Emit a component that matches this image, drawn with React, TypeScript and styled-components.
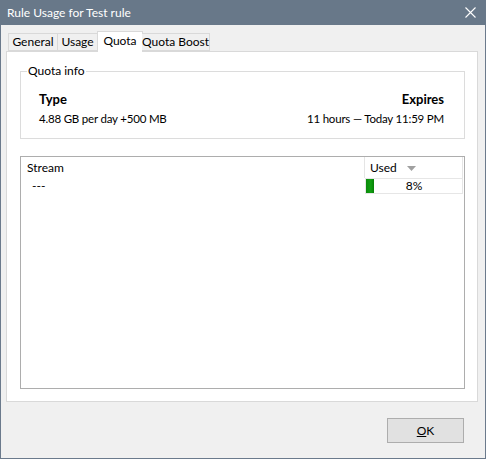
import React from 'react'
import styled, { createGlobalStyle } from 'styled-components'

/*
* Styles
*/

const FONT = `Lato, 'Noto Sans', sans-serif`

const GlobalStyle = createGlobalStyle`
  html, body {
    margin: 0;
    padding: 0;
    background: #ffffff;
  }

  body {
    font-family: ${FONT};
    font-size: 12px;
    color: #000000;
  }
`

const Window = styled.div`
  display: flex;
  flex-direction: column;
  box-sizing: border-box;
  width: 486px;
  height: 459px;
  border: 1px solid #6b7a8c;
  border-top: none;
  background: #f0f0f0;
`

const TitleBar = styled.div`
  display: flex;
  align-items: center;
  justify-content: space-between;
  height: 25px;
  margin: 0 -1px;
  padding: 0 10px 0 7px;
  background: #687889;
  color: #ffffff;
  font-size: 12px;
`

const TitleText = styled.span`
  line-height: 25px;
  margin-top: -1px;
`

const CloseGlyph = styled.svg`
  display: block;
  margin-top: -1px;
`

const Body = styled.div`
  display: flex;
  flex-direction: column;
  flex: 1;
  padding: 6px 7px 0 5px;
`

const TabStrip = styled.div`
  display: flex;
  align-items: flex-end;
  height: 20px;
  padding-left: 2px;
  position: relative;
  z-index: 1;
`

const Tab = styled.div<{ $active?: boolean; $width: number }>`
  box-sizing: border-box;
  width: ${p => p.$width}px;
  height: ${p => (p.$active ? 21 : 18)}px;
  margin-bottom: ${p => (p.$active ? -1 : 0)}px;
  margin-left: ${p => (p.$active ? -1 : 0)}px;
  margin-right: ${p => (p.$active ? -1 : 0)}px;
  border: 1px solid #d9d9d9;
  border-bottom: ${p => (p.$active ? 'none' : '1px solid #d9d9d9')};
  border-left: ${p => (p.$active ? '1px solid #d9d9d9' : 'none')};
  background: ${p => (p.$active ? '#ffffff' : '#f0f0f0')};
  display: flex;
  align-items: center;
  justify-content: center;
  white-space: nowrap;
  font-size: 12px;
  line-height: 16px;
  padding-bottom: ${p => (p.$active ? 3 : 0)}px;

  &:first-child {
    border-left: 1px solid #d9d9d9;
  }
`

const Panel = styled.div`
  box-sizing: border-box;
  display: flex;
  flex-direction: column;
  gap: 17px;
  width: 472px;
  height: 351px;
  padding: 12px 12px 12px 13px;
  border: 1px solid #d9d9d9;
  background: #ffffff;
`

const GroupBox = styled.fieldset`
  box-sizing: border-box;
  margin: 0;
  height: 75px;
  padding: 0 20px 0 18px;
  border: 1px solid #dcdcdc;
  display: flex;
  justify-content: space-between;
  align-items: flex-start;
`

const Legend = styled.legend`
  padding: 0 1px;
  margin-left: -12px;
  font-size: 12px;
  line-height: 14px;
`

const InfoBlock = styled.div<{ $align: 'left' | 'right' }>`
  display: flex;
  flex-direction: column;
  align-items: ${p => (p.$align === 'right' ? 'flex-end' : 'flex-start')};
  margin-top: 12px;
`

const InfoTitle = styled.div`
  font-weight: 700;
  font-size: 13px;
  line-height: 18px;
`

const InfoValue = styled.div`
  font-size: 11.5px;
  letter-spacing: -0.2px;
  line-height: 16px;
  margin-top: 3px;
`

const ListBox = styled.div`
  box-sizing: border-box;
  flex: 1;
  border: 1px solid #adadad;
  display: flex;
  flex-direction: column;
  padding: 0 1px;
`

const HeaderRow = styled.div`
  display: grid;
  grid-template-columns: 342px 99px;
  height: 21px;
`

const HeaderCell = styled.div<{ $divider?: boolean }>`
  display: flex;
  align-items: center;
  gap: 10px;
  padding-left: 5px;
  padding-top: 1px;
  border-left: ${p => (p.$divider ? '1px solid #e5e5e5' : 'none')};
  border-right: ${p => (p.$divider ? '1px solid #e5e5e5' : 'none')};
  font-size: 12px;
  line-height: 16px;
`

const SortArrow = styled.svg`
  display: block;
  margin-top: 1px;
`

const DataRow = styled.div`
  display: grid;
  grid-template-columns: 343px 98px;
  height: 16px;
`

const DataCell = styled.div`
  display: flex;
  align-items: center;
  padding-left: 10px;
  font-size: 12px;
  line-height: 16px;
`

const Meter = styled.div`
  position: relative;
  box-sizing: border-box;
  border: 1px solid #e6e6e6;
  display: flex;
  align-items: center;
  justify-content: center;
  font-size: 12px;
  line-height: 14px;
`

const MeterFill = styled.div`
  position: absolute;
  left: 0;
  top: 0;
  bottom: 0;
  background: linear-gradient(to right, #0a8a0a, #12a012 60%, #068006);
`

const MeterText = styled.span`
  position: relative;
`

const Footer = styled.div`
  display: flex;
  justify-content: flex-end;
  padding: 16px 14px 0 0;
`

const Button = styled.button`
  box-sizing: border-box;
  width: 77px;
  height: 25px;
  border: 1px solid #adadad;
  background: #e1e1e1;
  font-family: ${FONT};
  font-size: 12px;
  color: #000000;
  padding: 0;
`

const Mnemonic = styled.span`
  text-decoration: underline;
`

/*
* Components
*/

const tabs = [
  { label: 'General', width: 50 },
  { label: 'Usage', width: 40 },
  { label: 'Quota', width: 46, active: true },
  { label: 'Quota Boost', width: 68 },
]

export default function App() {
  const usedPercent = 8

  return (
    <>
      <GlobalStyle />
      <Window>
        <TitleBar>
          <TitleText>Rule Usage for Test rule</TitleText>
          <CloseGlyph width="11" height="11" viewBox="0 0 11 11">
            <path d="M0.5 0.5 L10.5 10.5 M10.5 0.5 L0.5 10.5" stroke="#ffffff" strokeWidth="1.1" />
          </CloseGlyph>
        </TitleBar>
        <Body>
          <TabStrip>
            {tabs.map(t => (
              <Tab key={t.label} $active={t.active} $width={t.width}>
                {t.label}
              </Tab>
            ))}
          </TabStrip>
          <Panel>
            <GroupBox>
              <Legend>Quota info</Legend>
              <InfoBlock $align="left">
                <InfoTitle>Type</InfoTitle>
                <InfoValue>4.88 GB per day +500 MB</InfoValue>
              </InfoBlock>
              <InfoBlock $align="right">
                <InfoTitle>Expires</InfoTitle>
                <InfoValue>11 hours — Today 11:59 PM</InfoValue>
              </InfoBlock>
            </GroupBox>
            <ListBox>
              <HeaderRow>
                <HeaderCell>Stream</HeaderCell>
                <HeaderCell $divider>
                  Used
                  <SortArrow width="9" height="5" viewBox="0 0 9 5">
                    <path d="M0 0 L9 0 L4.5 5 Z" fill="#a0a0a0" />
                  </SortArrow>
                </HeaderCell>
              </HeaderRow>
              <DataRow>
                <DataCell>---</DataCell>
                <Meter>
                  <MeterFill style={{ width: `${usedPercent}%` }} />
                  <MeterText>{usedPercent}%</MeterText>
                </Meter>
              </DataRow>
            </ListBox>
          </Panel>
          <Footer>
            <Button>
              <Mnemonic>O</Mnemonic>K
            </Button>
          </Footer>
        </Body>
      </Window>
    </>
  )
}
